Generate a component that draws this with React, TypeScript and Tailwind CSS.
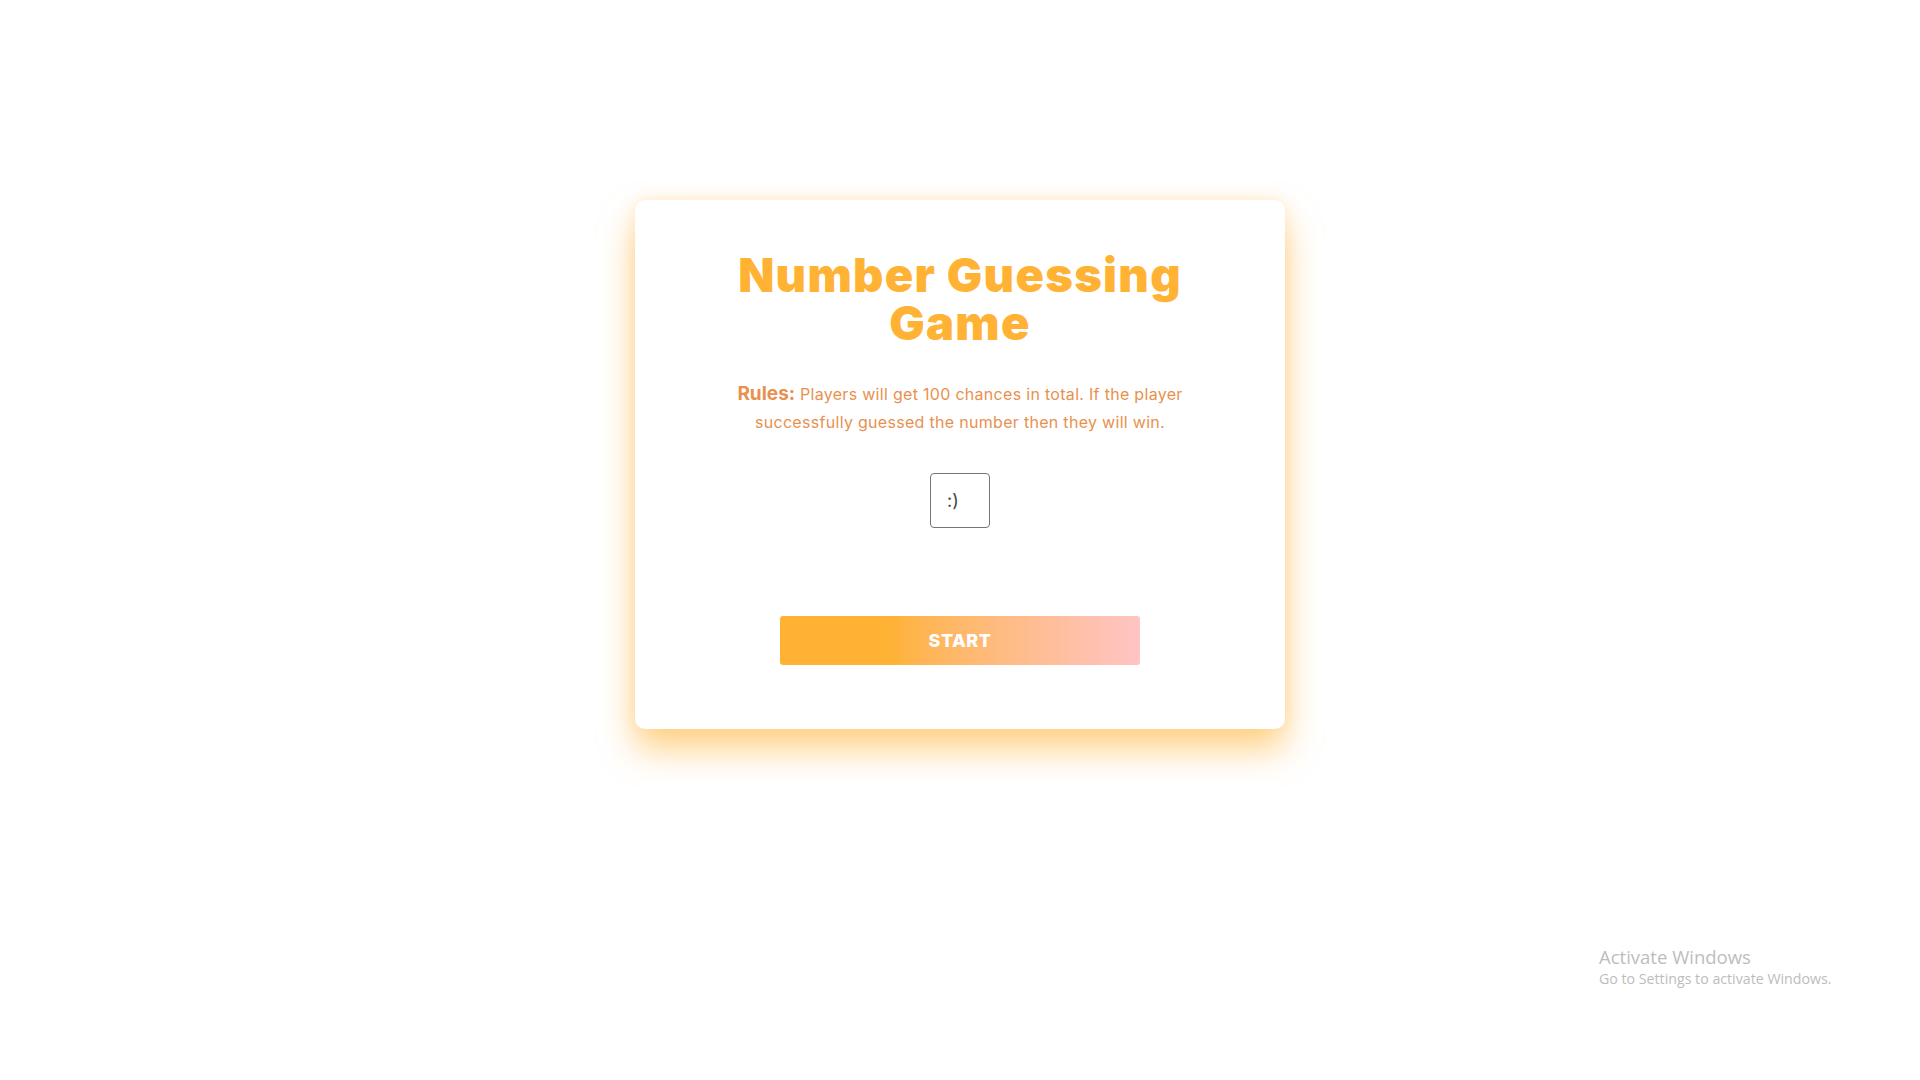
import { useState } from "react";

const App = () => {
  const [guess, setGuess] = useState<string>("");

  return (
    <main className="relative min-h-screen w-full bg-white font-['Inter',sans-serif]">
      <div className="flex justify-center pt-[200px]">
        <section className="flex w-[650px] flex-col items-center rounded-[10px] bg-white px-10 pt-[51px] pb-[64px] shadow-[0_20px_34px_rgba(255,178,51,0.6),0_-2px_14px_rgba(255,200,120,0.25)]">
          <h1 className="w-[480px] text-center text-[47px] leading-[48px] font-black tracking-[1.3px] text-[#ffb233]">
            Number Guessing Game
          </h1>

          <p className="mt-[33px] w-[460px] text-center text-[16px] leading-[28px] tracking-[0.3px] text-[#e8914f]">
            <span className="text-[19px] font-bold tracking-normal">Rules:</span>{" "}
            Players will get 100 chances in total. If the player successfully
            guessed the number then they will win.
          </p>

          <input
            type="text"
            value={guess}
            onChange={(e) => setGuess(e.target.value)}
            placeholder=":)"
            className="mt-[37px] h-[55px] w-[60px] rounded-[4px] border border-[#767676] px-4 text-[18px] text-[#333] outline-none placeholder:text-[#444]"
          />

          <button className="mt-[88px] h-[49px] w-[360px] rounded-[3px] bg-linear-to-r from-[#ffb233] from-30% to-[#ffc4c4] text-[18px] font-extrabold tracking-[0.5px] text-white">
            START
          </button>
        </section>
      </div>

      {/* windows watermark */}
      <div className="absolute left-[1599px] top-[945px] font-['Open_Sans',sans-serif] text-[#bdbdbd]">
        <p className="text-[18.5px] leading-[24px]">Activate Windows</p>
        <p className="text-[14.2px] leading-[20px]">
          Go to Settings to activate Windows.
        </p>
      </div>
    </main>
  );
};

export default App;
